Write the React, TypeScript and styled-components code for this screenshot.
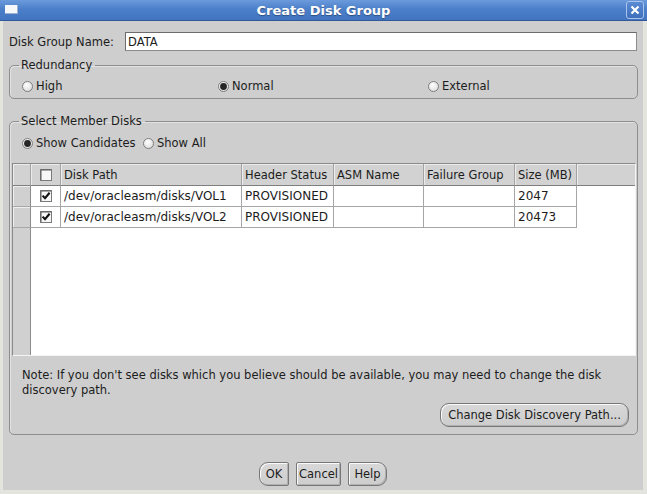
import React from "react";
import styled, { createGlobalStyle } from "styled-components";

const GlobalStyle = createGlobalStyle`
  html, body { margin: 0; padding: 0; background: #e4e4de; }
  body { font-family: "DejaVu Sans", "Liberation Sans", sans-serif; color: #1c1c1c; }
  * { box-sizing: border-box; }
`;

const Window = styled.div`
  width: 647px;
  height: 494px;
  display: flex;
  flex-direction: column;
  background: #e4e4de;
  overflow: hidden;
`;

const TitleBar = styled.div`
  flex: none;
  height: 21px;
  display: grid;
  grid-template-columns: 1fr auto 1fr;
  align-items: center;
  background: linear-gradient(#6b9bdc, #4c7fc9 45%, #4274c0);
  border-bottom: 1px solid #30599a;
`;

const TitleText = styled.div`
  font-family: "DejaVu Sans", sans-serif;
  font-weight: bold;
  font-size: 13px;
  color: #fff;
  text-shadow: 0 1px 1px rgba(0, 0, 0, 0.35);
  white-space: nowrap;
`;

const WinIcon = styled.div`
  justify-self: start;
  margin-left: 5px;
  width: 13px;
  height: 9px;
  background: #f6f8fb;
  border-right: 1px solid #9fb3cf;
  border-bottom: 1px solid #9fb3cf;
  margin-top: -1px;
`;

const CloseBtn = styled.div`
  justify-self: end;
  margin-right: 3px;
  width: 18px;
  height: 18px;
  border: 1px solid #a9c3ea;
  border-radius: 3px;
  background: linear-gradient(#5a8bd3, #3f6fbb);
  display: flex;
  align-items: center;
  justify-content: center;
`;

const Body = styled.div`
  flex: 1;
  margin: 0 4px 4px 3px;
  background: #cecece;
  display: flex;
  flex-direction: column;
  padding-top: 11px;
  font-size: 11.5px;
`;

const NameRow = styled.div`
  display: flex;
  align-items: center;
  height: 19px;
  padding: 0 6px 0 6px;
`;

const Label = styled.div`
  flex: none;
  width: 116px;
  white-space: nowrap;
`;

const TextInput = styled.input`
  flex: 1;
  height: 19px;
  border: 1px solid #8c8c8c;
  border-top-color: #6c6c6c;
  border-left-color: #6c6c6c;
  background: #fff;
  font-family: "DejaVu Sans", sans-serif;
  font-size: 11.5px;
  padding: 0 2px;
  color: #1c1c1c;
  outline: none;
`;

const Group = styled.fieldset<{ $mt: number; $pb: number }>`
  margin: ${(p) => p.$mt}px 5px 0 6px;
  border: 1px solid #8e8e8e;
  border-radius: 5px;
  padding: 0 1px ${(p) => p.$pb}px 2px;
  min-width: 0;
  box-shadow: inset 1px 1px 0 #e2e2e2;
`;

const Legend = styled.legend`
  margin-left: 7px;
  padding: 0 3px 0 2px;
  line-height: 14px;
  font-size: 11.5px;
  color: #1c1c1c;
`;

const RadioRow = styled.div<{ $cols: string; $pt: number }>`
  display: grid;
  grid-template-columns: ${(p) => p.$cols};
  padding: ${(p) => p.$pt}px 0 0 10px;
  height: ${(p) => p.$pt + 14}px;
  align-items: center;
`;

const RadioItem = styled.label`
  display: flex;
  align-items: center;
  gap: 3px;
  height: 14px;
  white-space: nowrap;
`;

const TableBox = styled.div`
  margin-top: 13px;
  height: 193px;
  border: 1px solid #8a8a8a;
  border-right-color: #f4f4f4;
  border-bottom-color: #f4f4f4;
  background: linear-gradient(to right, #d0d0d0 0 17px, #8c8c8c 17px 18px, #fff 18px);
  overflow: hidden;
`;

const Grid = styled.div`
  display: grid;
  grid-template-columns: 18px 30px 181px 92px 90px 91px 62px 1fr;
  grid-auto-rows: 21px;
  grid-template-rows: 22px;
  font-size: 12px;
`;

const HeadCell = styled.div<{ $filler?: boolean; $center?: boolean }>`
  background: #d2d2d2;
  border-right: ${(p) => (p.$filler ? "none" : "1px solid #a4a4a4")};
  border-bottom: 1px solid #7e7e7e;
  box-shadow: inset 1px 1px 0 #ececec;
  display: flex;
  align-items: center;
  justify-content: ${(p) => (p.$center ? "center" : "flex-start")};
  padding-left: ${(p) => (p.$center ? 0 : 3)}px;
  white-space: nowrap;
  overflow: hidden;
  font-size: 11.5px;
  color: #1c1c1c;
`;

const RowHead = styled.div`
  background: #d0d0d0;
  border-right: 1px solid #8c8c8c;
  border-bottom: 1px solid #a8a8a8;
  box-shadow: inset 1px 1px 0 #eeeeee;
`;

const Cell = styled.div<{ $center?: boolean; $blank?: boolean }>`
  background: #fff;
  border-right: ${(p) => (p.$blank ? "none" : "1px solid #a6a6a6")};
  border-bottom: ${(p) => (p.$blank ? "none" : "1px solid #a6a6a6")};
  display: flex;
  align-items: center;
  justify-content: ${(p) => (p.$center ? "center" : "flex-start")};
  padding-left: ${(p) => (p.$center ? 0 : 3)}px;
  white-space: nowrap;
  overflow: hidden;
`;

const Note = styled.div`
  margin-top: 12px;
  padding-left: 10px;
  line-height: 15px;
  white-space: nowrap;
`;

const ButtonRow = styled.div<{ $justify: string; $mt: number }>`
  display: flex;
  justify-content: ${(p) => p.$justify};
  gap: 7px;
  margin-top: ${(p) => p.$mt}px;
  padding-right: ${(p) => (p.$justify === "flex-end" ? 7 : 0)}px;
`;

const Button = styled.button<{ $w: number; $l: number; $r: number }>`
  width: ${(p) => p.$w}px;
  height: 24px;
  border: 1px solid #777;
  border-radius: ${(p) => `${p.$l}px ${p.$r}px ${p.$r}px ${p.$l}px`};
  background: linear-gradient(#d8d8d8, #cdcdcd);
  box-shadow: inset 1px 1px 0 #fafafa, inset -1px -1px 0 #b0b0b0;
  font-family: "DejaVu Sans", sans-serif;
  font-size: 11.5px;
  color: #1c1c1c;
  padding: 0;
  white-space: nowrap;
`;

const Radio = ({ checked }: { checked?: boolean }) => (
  <svg width="11" height="11" viewBox="0 0 11 11">
    <defs>
      <radialGradient id="rg" cx="40%" cy="35%" r="70%">
        <stop offset="0" stopColor="#ffffff" />
        <stop offset="1" stopColor="#dcdcdc" />
      </radialGradient>
    </defs>
    <circle cx="5.5" cy="5.5" r="5" fill="url(#rg)" stroke="#7c7c7c" strokeWidth="1" />
    {checked && <circle cx="5.5" cy="5.5" r="3.4" fill="#252525" />}
  </svg>
);

const Check = ({ checked }: { checked?: boolean }) => (
  <svg width="12" height="12" viewBox="0 0 12 12">
    <rect x="0.5" y="0.5" width="11" height="11" fill="#f7f7f7" stroke="#7a7a7a" />
    <path d="M1 1 H11 M1 1 V11" stroke="#5a5a5a" strokeWidth="1" />
    {checked && (
      <path d="M2.6 5.6 L5 8.2 L9.6 2.8" fill="none" stroke="#111" strokeWidth="2.1" />
    )}
  </svg>
);

const rows = [
  { path: "/dev/oracleasm/disks/VOL1", status: "PROVISIONED", size: "2047" },
  { path: "/dev/oracleasm/disks/VOL2", status: "PROVISIONED", size: "20473" },
];

export default function App() {
  return (
    <Window>
      <GlobalStyle />
      <TitleBar>
        <WinIcon />
        <TitleText>Create Disk Group</TitleText>
        <CloseBtn>
          <svg width="10" height="10" viewBox="0 0 10 10">
            <path d="M1.5 1.5 L8.5 8.5 M8.5 1.5 L1.5 8.5" stroke="#fff" strokeWidth="2.2" />
          </svg>
        </CloseBtn>
      </TitleBar>
      <Body>
        <NameRow>
          <Label>Disk Group Name:</Label>
          <TextInput defaultValue="DATA" />
        </NameRow>

        <Group $mt={7} $pb={5}>
          <Legend>Redundancy</Legend>
          <RadioRow $cols="196px 210px 1fr" $pt={7}>
            <RadioItem><Radio />High</RadioItem>
            <RadioItem><Radio checked />Normal</RadioItem>
            <RadioItem><Radio />External</RadioItem>
          </RadioRow>
        </Group>

        <Group $mt={15} $pb={7}>
          <Legend>Select Member Disks</Legend>
          <RadioRow $cols="121px 1fr" $pt={8}>
            <RadioItem><Radio checked />Show Candidates</RadioItem>
            <RadioItem><Radio />Show All</RadioItem>
          </RadioRow>
          <TableBox>
            <Grid>
              <HeadCell />
              <HeadCell $center>
                <Check />
              </HeadCell>
              <HeadCell>Disk Path</HeadCell>
              <HeadCell>Header Status</HeadCell>
              <HeadCell>ASM Name</HeadCell>
              <HeadCell>Failure Group</HeadCell>
              <HeadCell>Size (MB)</HeadCell>
              <HeadCell $filler />
              {rows.map((r) => (
                <React.Fragment key={r.path}>
                  <RowHead />
                  <Cell $center><Check checked /></Cell>
                  <Cell>{r.path}</Cell>
                  <Cell>{r.status}</Cell>
                  <Cell />
                  <Cell />
                  <Cell>{r.size}</Cell>
                  <Cell $blank />
                </React.Fragment>
              ))}
            </Grid>
          </TableBox>
          <Note>
            Note: If you don't see disks which you believe should be available, you may need to change the disk
            <br />
            discovery path.
          </Note>
          <ButtonRow $justify="flex-end" $mt={5}>
            <Button $w={189} $l={9} $r={9}>Change Disk Discovery Path...</Button>
          </ButtonRow>
        </Group>

        <ButtonRow $justify="center" $mt={27}>
          <Button $w={30} $l={9} $r={2}>OK</Button>
          <Button $w={45} $l={2} $r={2}>Cancel</Button>
          <Button $w={39} $l={2} $r={9}>Help</Button>
        </ButtonRow>
      </Body>
    </Window>
  );
}
